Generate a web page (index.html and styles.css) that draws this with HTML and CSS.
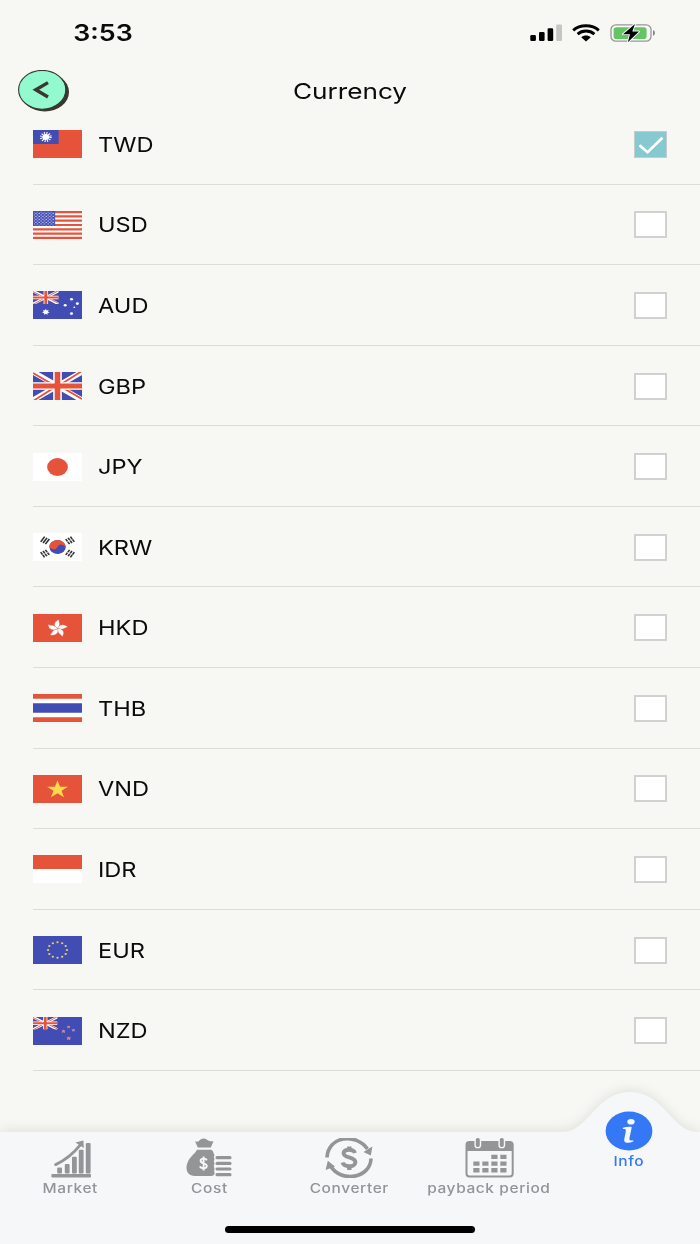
FILE: index.html
```
<!DOCTYPE html>
<html lang="en">
<head>
<meta charset="utf-8">
<title>Currency</title>
<link rel="stylesheet" href="styles.css">
</head>
<body>
<svg class="defs" width="0" height="0">
  <defs>
    <symbol id="union" viewBox="0 0 42 28" preserveAspectRatio="none">
      <rect width="42" height="28" fill="#414db3"/>
      <path d="M0 0L42 28M42 0L0 28" stroke="#fff" stroke-width="5.2"/>
      <path d="M0 1L19 14M42 -1L23 13M0 29L19 15M42 27L23 14" stroke="#e6533b" stroke-width="1.7"/>
      <path d="M21 0V28M0 14H42" stroke="#fff" stroke-width="7.4"/>
      <path d="M21 0V28M0 14H42" stroke="#e6533b" stroke-width="4.8"/>
    </symbol>
    <symbol id="star" viewBox="-10 -10 20 20">
      <path d="M0 -10L2.3 -3.1H9.5L3.7 1.2L5.9 8.1L0 3.8L-5.9 8.1L-3.7 1.2L-9.5 -3.1H-2.3Z"/>
    </symbol>
    <pattern id="dots" width="3" height="3" patternUnits="userSpaceOnUse">
      <circle cx=".9" cy=".9" r=".65" fill="#c3c8ec"/><circle cx="2.4" cy="2.4" r=".65" fill="#c3c8ec"/>
    </pattern>
  </defs>
</svg>
<div class="screen">
  <header class="status">
    <span class="wide clock">3:53</span>
    <div class="indicators">
      <svg width="33" height="18" viewBox="0 0 33 18"><rect x="0.3" y="11" width="5.6" height="6" rx="1.3"/><rect x="9" y="8" width="5.6" height="9" rx="1.3"/><rect x="17.6" y="4.3" width="5.6" height="12.7" rx="1.3"/><rect x="26.2" y="0.5" width="5.8" height="16.5" rx="1.3" fill="#c5c5c3"/></svg>
      <svg class="wifi" width="28" height="18" viewBox="0 0 28 18"><g fill="none" stroke="#000" stroke-width="2.9"><path d="M1.2 6.3C8 .2 20 .2 26.8 6.3"/><path d="M5.6 10.1C10.3 6 17.7 6 22.4 10.1"/></g><path d="M9.2 13.3C11.8 11 16.2 11 18.8 13.3L14 17.4Z"/></svg>
      <svg width="46" height="20" viewBox="0 0 46 20"><rect x="1" y="1.8" width="40" height="16.4" rx="4.8" fill="#f8fbf6" stroke="#969894" stroke-width="1.3"/><rect x="3.6" y="4.2" width="33" height="11.8" rx="2.8" fill="#65c466"/><path d="M43 7.3C45.6 7.8 45.6 12.2 43 12.7Z" fill="#858585"/><path d="M25 1L13 11.2H20L17.8 19.2L29 8.5H22.3Z" stroke="#fff" stroke-width="1.8" paint-order="stroke" stroke-linejoin="round"/></svg>
    </div>
  </header>
  <nav class="titlebar">
    <svg class="back" width="52" height="42" viewBox="0 0 52 42"><ellipse cx="26.8" cy="22" rx="24.2" ry="19.6" fill="#39372f"/><ellipse cx="24.2" cy="19.8" rx="23.6" ry="19.4" fill="#93facf" stroke="#39372f" stroke-width="1.1"/><path d="M30 12.6L17.8 19.8L30 27" fill="none" stroke="#39372f" stroke-width="3.4"/></svg>
    <h1 class="wide title">Currency</h1>
  </nav>
  <main class="list">
    <div class="row"><svg class="flag" viewBox="0 0 42 28" preserveAspectRatio="none"><path fill="#e6533b" d="M0 0H42V28H0Z"/><path fill="#414db3" d="M0 0H22V14H0Z"/><circle cx="11" cy="7" r="2.9" fill="#fff"/><circle cx="11" cy="7" r="3.8" fill="none" stroke="#fff" stroke-width="2.5" stroke-dasharray=".9 1.09"/></svg><span class="wide code">TWD</span><span class="check on"><svg width="26" height="20" viewBox="0 0 26 20"><path d="M1.5 10.2L9.5 17.2L24.5 2.8" fill="none" stroke="#fff" stroke-width="2.7"/></svg></span></div>
    <div class="row"><svg class="flag" viewBox="0 0 42 28" preserveAspectRatio="none"><path fill="#fff" d="M0 0H42V28H0Z"/><path stroke="#e6533b" stroke-width="2.15" d="M0 1.08H42M0 5.38H42M0 9.69H42M0 14H42M0 18.3H42M0 22.6H42M0 26.9H42"/><path fill="#414db3" d="M0 0H19V15H0Z"/><path fill="url(#dots)" d="M.7 .7H18.5V14.4H.7Z"/></svg><span class="wide code">USD</span><span class="check"></span></div>
    <div class="row"><svg class="flag" viewBox="0 0 42 28" preserveAspectRatio="none"><path fill="#414db3" d="M0 0H42V28H0Z"/><use href="#union" width="22" height="13"/><g fill="#fff"><path d="M11 17.8L11.8 19.4L13.5 19L12.8 20.6L14.2 21.7L12.5 22.1L12.4 23.8L11 22.8L9.6 23.8L9.5 22.1L7.8 21.7L9.2 20.6L8.5 19L10.2 19.4Z"/><circle cx="27.6" cy="14.3" r="1.3"/><circle cx="33" cy="8.2" r="1.3"/><circle cx="38" cy="12.6" r="1.3"/><circle cx="35.4" cy="16.3" r=".8"/><circle cx="33" cy="22.6" r="1.3"/></g></svg><span class="wide code">AUD</span><span class="check"></span></div>
    <div class="row"><svg class="flag" viewBox="0 0 42 28" preserveAspectRatio="none"><use href="#union" width="42" height="28"/></svg><span class="wide code">GBP</span><span class="check"></span></div>
    <div class="row"><svg class="flag" viewBox="0 0 42 28" preserveAspectRatio="none"><path fill="#fff" d="M0 0H42V28H0Z"/><circle cx="21" cy="14" r="8.9" fill="#e6533b"/></svg><span class="wide code">JPY</span><span class="check"></span></div>
    <div class="row"><svg class="flag" viewBox="0 0 42 28" preserveAspectRatio="none"><path fill="#fff" d="M0 0H42V28H0Z"/><g transform="rotate(20 21 14)"><circle cx="21" cy="14" r="7" fill="#414db3"/><path fill="#e6533b" d="M14 14A7 7 0 0 1 28 14A3.5 3.5 0 0 0 21 14A3.5 3.5 0 0 1 14 14Z"/></g><g stroke="#333" stroke-width="1.4"><path d="M6.6 8.8L10 3.6M8.6 10L12 4.8M10.6 11.2L14 6"/><path d="M35.4 8.8L32 3.6M33.4 10L30 4.8M31.4 11.2L28 6" stroke-dasharray="2.8 .5"/><path d="M6.6 19.2L10 24.4M8.6 18L12 23.2M10.6 16.8L14 22" stroke-dasharray="2.8 .5"/><path d="M35.4 19.2L32 24.4M33.4 18L30 23.2M31.4 16.8L28 22" stroke-dasharray="2.8 .5"/></g></svg><span class="wide code">KRW</span><span class="check"></span></div>
    <div class="row"><svg class="flag" viewBox="0 0 42 28" preserveAspectRatio="none"><path fill="#e6533b" d="M0 0H42V28H0Z"/><g transform="translate(21 14.6)" fill="#fff" stroke="#e6533b" stroke-width=".35"><path id="petal" d="M0 0C-4 -2.5 -3.2 -7.4 1.6 -9C.4 -6.8 3.6 -4 0 0Z"/><use href="#petal" transform="rotate(72)"/><use href="#petal" transform="rotate(144)"/><use href="#petal" transform="rotate(216)"/><use href="#petal" transform="rotate(288)"/></g></svg><span class="wide code">HKD</span><span class="check"></span></div>
    <div class="row"><svg class="flag" viewBox="0 0 42 28" preserveAspectRatio="none"><path fill="#e6533b" d="M0 0H42V28H0Z"/><path fill="#fff" d="M0 4.7H42V23.3H0Z"/><path fill="#414db3" d="M0 9.3H42V18.7H0Z"/></svg><span class="wide code">THB</span><span class="check"></span></div>
    <div class="row"><svg class="flag" viewBox="0 0 42 28" preserveAspectRatio="none"><path fill="#e6533b" d="M0 0H42V28H0Z"/><use href="#star" x="11.6" y="5.3" width="18.8" height="18.8" fill="#f9da49"/></svg><span class="wide code">VND</span><span class="check"></span></div>
    <div class="row"><svg class="flag" viewBox="0 0 42 28" preserveAspectRatio="none"><path fill="#fff" d="M0 0H42V28H0Z"/><path fill="#e6533b" d="M0 0H42V14H0Z"/></svg><span class="wide code">IDR</span><span class="check"></span></div>
    <div class="row"><svg class="flag" viewBox="0 0 42 28" preserveAspectRatio="none"><path fill="#414db3" d="M0 0H42V28H0Z"/><g fill="#e5d25c"><circle cx="21" cy="6.2" r="1"/><circle cx="25" cy="7.2" r="1"/><circle cx="28" cy="10.1" r="1"/><circle cx="29.1" cy="14" r="1"/><circle cx="28" cy="17.9" r="1"/><circle cx="25" cy="20.8" r="1"/><circle cx="21" cy="21.8" r="1"/><circle cx="17" cy="20.8" r="1"/><circle cx="14" cy="17.9" r="1"/><circle cx="12.9" cy="14" r="1"/><circle cx="14" cy="10.1" r="1"/><circle cx="17" cy="7.2" r="1"/></g></svg><span class="wide code">EUR</span><span class="check"></span></div>
    <div class="row"><svg class="flag" viewBox="0 0 42 28" preserveAspectRatio="none"><path fill="#414db3" d="M0 0H42V28H0Z"/><use href="#union" width="21" height="12.5"/><g fill="#ef7468" stroke="#d9b4cf" stroke-width="2"><use href="#star" x="24.4" y="12.6" width="3.4" height="3.4"/><use href="#star" x="28.9" y="8.4" width="3.2" height="3.2"/><use href="#star" x="33" y="11.6" width="3.2" height="3.2"/><use href="#star" x="28.7" y="19.4" width="3.8" height="3.8"/></g></svg><span class="wide code">NZD</span><span class="check"></span></div>
  </main>
  <footer class="tabs">
    <svg class="tabs-bg" width="700" height="152" viewBox="0 0 700 152"><path fill="#f6f7f9" d="M0 40H563C588 40 596 0 630 0C664 0 672 40 697 40H700V152H0Z"/></svg>
    <div class="tab"><svg width="42" height="40" viewBox="-1.4 0 42 40" fill="#939597"><rect x="1" y="36" width="39.6" height="3.4" rx="1"/><rect x="6.8" y="29.6" width="4.8" height="6" rx="1"/><rect x="14.4" y="26" width="4.8" height="9.5" rx="1"/><rect x="21.6" y="18.8" width="4.8" height="16.7" rx="1"/><rect x="28.4" y="11.8" width="4.8" height="23.7" rx="1"/><rect x="35.4" y="5" width="4.8" height="30.4" rx="1"/><path d="M5.3 26.6C15 22 23 15.5 29.5 7.4" fill="none" stroke="#939597" stroke-width="2.9" stroke-linecap="round"/><path d="M25 4.6L33 2.4L33.4 10Z"/></svg><span class="wide label">Market</span></div>
    <div class="tab"><svg class="bag" width="46" height="40" viewBox="0 0 46 40" fill="#939597"><path d="M9 3.3C12 4.3 13 3 14.5 1.4C17 0 19 .2 21 1.8C23 3.4 25 3.4 27.5 3.3L24.8 9.6H11.8Z"/><path d="M11 11.8H25.5C27 13.2 27.8 14.8 28 16.5C29.5 17.6 27.2 18.8 28 20C29.3 21.6 27.3 22.6 28 24.2C29.3 26 27.3 27 28 29C29.3 31 27.4 32.2 28.5 34.5C29 36.5 27.5 38 25 38H9C-2 37.5 -1 26 4.5 19.5C8 15.8 9.5 14.5 11 11.8Z"/><path d="M20.8 22.4C20 20 14.5 20 14.6 22.9C14.8 26 20.8 24.6 20.8 28C20.8 30.9 14.8 31 14 28.2M17.6 18.6V32.4" fill="none" stroke="#f6f7f9" stroke-width="1.9"/><rect x="29.5" y="18" width="16" height="3.2" rx="1.5"/><rect x="29.5" y="23.7" width="16" height="3.2" rx="1.5"/><rect x="29.5" y="29.4" width="16" height="3.2" rx="1.5"/><rect x="29.5" y="35" width="16" height="3.2" rx="1.5"/></svg><span class="wide label">Cost</span></div>
    <div class="tab"><svg width="48" height="40" viewBox="0 0 48 40" fill="#939597"><path d="M2 19.5C3 -2 31 -5.5 42.5 11M46 20.5C45.5 40 16.5 45.5 5.5 28" fill="none" stroke="#939597" stroke-width="3.6"/><path d="M38.5 14L47.4 8.6L45.8 17.6ZM.6 32L2.8 22.8L10 28.4Z"/><path d="M30 15C28.6 10.6 18.8 10.4 18.6 15.2C18.8 20.6 30.2 18 30.4 24.2C30.2 29.6 18.8 29.2 17.6 24.6" fill="none" stroke="#939597" stroke-width="4"/><path d="M24.3 8.6V12.5M24.3 28V32" fill="none" stroke="#939597" stroke-width="4.4"/></svg><span class="wide label">Converter</span></div>
    <div class="tab"><svg width="50" height="40" viewBox="-.5 0 50 40" fill="#939597"><rect x="2" y="4" width="46.2" height="34.6" rx="3" fill="none" stroke="#939597" stroke-width="2"/><path d="M2 4H48V13H2Z"/><g stroke="#f6f7f9" stroke-width="1.4"><rect x="10.6" y="-.6" width="5.4" height="10.2" rx="2.4"/><rect x="34.6" y="-.6" width="5.4" height="10.2" rx="2.4"/></g><path d="M26.8 16.8H33V21H26.8ZM35.8 16.8H42V21H35.8ZM8.8 23.4H15V27.8H8.8ZM17.8 23.4H24V27.8H17.8ZM26.8 23.4H33V27.8H26.8ZM35.8 23.4H42V27.8H35.8ZM8.8 30H15V34.4H8.8ZM17.8 30H24V34.4H17.8ZM26.8 30H33V34.4H26.8ZM35.8 30H42V34.4H35.8Z"/></svg><span class="wide label">payback period</span></div>
    <div class="tab active"><svg width="48" height="40" viewBox="0 0 48 40"><ellipse cx="24" cy="20" rx="23.4" ry="19.6" fill="#3478f6"/><ellipse cx="26" cy="10.7" rx="3.7" ry="2.8" fill="#f6f7f9"/><path d="M18.5 16.6C21 15.8 24 15.6 26.8 15.9L24.4 27.6C24.1 29.6 26 29.8 28.4 29.2L28.2 30.6C24 32.6 18.4 32.4 19.2 28.4L20.9 20C21.2 18.2 19.8 18 17.6 18.1Z" fill="#f6f7f9"/></svg><span class="wide label">Info</span></div>
    <div class="home"></div>
  </footer>
</div>
</body>
</html>
```
FILE: styles.css
```
* { box-sizing: border-box; }
body { margin: 0; background: #f7f8f3; font-family: Inter, "Liberation Sans", sans-serif; color: #0b0b0b; }
.defs { position: absolute; }
.screen { width: 700px; height: 1244px; display: flex; flex-direction: column; overflow: hidden; background: #f7f8f3; }
svg { display: block; flex: none; }

/* Letterforms are extended horizontally throughout */
.wide { display: inline-block; transform: scaleX(1.19); white-space: nowrap; }

.status { height: 66px; display: flex; justify-content: space-between; padding: 20px 44px 0 77.5px; }
.clock { font-size: 22.5px; font-weight: 600; line-height: 26px; height: 26px; }
.indicators { display: flex; align-items: flex-start; padding-top: 4px; }
.indicators svg:last-child { margin: -1px 0 0 10px; }
.wifi { margin-left: 9px; }

.titlebar { height: 38px; display: grid; grid-template-columns: 52px 1fr 52px; padding: 4px 18px 0; }
.title { margin: 0; font-size: 22px; font-weight: 400; line-height: 42px; height: 42px; text-align: center; }

.list { height: 967.2px; flex: none; display: grid; grid-template-rows: repeat(12, 80.58px); padding-left: 33px; }
.row { display: flex; align-items: center; padding: 1px 33px 0 0; border-bottom: 1px solid #dcddd9; }
.flag { width: 49px; height: 28px; }
.code { margin-left: 16.4px; padding-top: 1px; font-size: 20px; transform: scaleX(1.18); transform-origin: left center; }
.check { width: 33px; height: 27px; margin-left: auto; border: 2px solid #d0d1d0; background: #fff; }
.check.on { background: #87c9d0; border: 1px solid #c5cccb; display: grid; place-items: center; padding-top: 2px; }

.tabs { position: relative; height: 152px; margin-top: auto; display: grid; grid-template-columns: repeat(5, 139.8px); grid-template-rows: 134px 7px; }
.tabs-bg { position: absolute; left: 0; top: 0; overflow: visible; filter: drop-shadow(0 -2px 6px rgba(0, 0, 0, .09)); }
.tab { position: relative; padding-top: 46px; display: flex; flex-direction: column; align-items: center; color: #929497; }
.tab svg { height: 40px; }
.tab .bag { margin-right: 2px; }
.label { margin-top: 1px; font-size: 13px; font-weight: 500; line-height: 18px; letter-spacing: .5px; }
.active { padding-top: 19px; color: #3478f6; }
.home { position: relative; grid-column: 1 / -1; justify-self: center; width: 250px; height: 7px; border-radius: 4px; background: #000; margin-left: 1px; }
```
